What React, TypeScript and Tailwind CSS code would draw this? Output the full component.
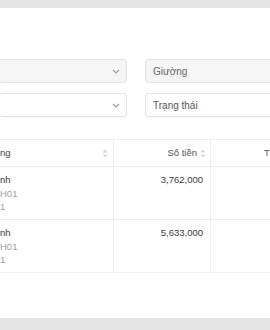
import React from "react";

const font = { fontFamily: '"Liberation Sans", Arial, sans-serif' };

function Chevron() {
  return (
    <svg width="8" height="5" viewBox="0 0 8 5" className="text-[#9a9a9a]">
      <path d="M1 1l3 3 3-3" fill="none" stroke="currentColor" strokeWidth="1.1" />
    </svg>
  );
}

function SortIcon() {
  return (
    <svg width="6" height="9" viewBox="0 0 6 9" className="text-[#d6d6d6] shrink-0">
      <path d="M3 0.5L5.5 3.5H0.5z" fill="currentColor" />
      <path d="M3 8.5L5.5 5.5H0.5z" fill="currentColor" />
    </svg>
  );
}

const rows = [
  { name: "nh", room: "H01", bed: "1", amount: "3,762,000" },
  { name: "nh", room: "H01", bed: "1", amount: "5,633,000" },
];

export default function App() {
  return (
    <div className="w-[270px] h-[330px] bg-[#e5e5e5] flex flex-col overflow-hidden" style={font}>
      <div className="h-[8px] shrink-0" />
      <div className="flex-1 bg-white overflow-hidden pt-[51px]">
        {/* Filters */}
        <div className="flex flex-col gap-[10px]">
          <div className="flex gap-[18px]">
            <div className="w-[128px] h-[24px] -ml-[1px] bg-[#f5f5f5] border border-[#e3e3e3] rounded-[3px] flex items-center justify-end pr-[6px] shrink-0">
              <Chevron />
            </div>
            <div className="w-[140px] h-[24px] shrink-0 bg-[#f5f5f5] border border-[#e3e3e3] rounded-[3px] flex items-center pl-[7px] text-[10px] text-[#666]">
              Giường
            </div>
          </div>
          <div className="flex gap-[18px]">
            <div className="w-[128px] h-[24px] -ml-[1px] bg-white border border-[#e3e3e3] rounded-[3px] flex items-center justify-end pr-[6px] shrink-0">
              <Chevron />
            </div>
            <div className="w-[140px] h-[24px] shrink-0 bg-white border border-[#e3e3e3] rounded-[3px] flex items-center pl-[7px] text-[10px] text-[#555]">
              Trạng thái
            </div>
          </div>
        </div>

        {/* Table */}
        <div className="mt-[22px] w-[300px] grid grid-cols-[114px_97px_89px] border-t border-[#ededed] text-[9.5px] text-[#3a3a3a]">
          <div className="h-[27px] border-r border-b border-[#ededed] flex items-center justify-between pr-[5px] text-[#444]">
            <span>ng</span>
            <SortIcon />
          </div>
          <div className="h-[27px] border-r border-b border-[#ededed] flex items-center justify-end gap-[3px] pr-[4px] text-[#555]">
            <span>Số tiền</span>
            <SortIcon />
          </div>
          <div className="h-[27px] border-b border-[#ededed] flex items-center pl-[53px] text-[#555]">
            <span>T</span>
          </div>

          {rows.map((r, i) => (
            <React.Fragment key={i}>
              <div className="h-[53px] border-r border-b border-[#ededed] pt-[6px] leading-[13.5px]">
                <div>{r.name}</div>
                <div className="text-[#a0a0a0]">{r.room}</div>
                <div className="text-[#a0a0a0]">{r.bed}</div>
              </div>
              <div className="h-[53px] border-r border-b border-[#ededed] pt-[6px] pr-[7px] text-right leading-[13.5px]">
                {r.amount}
              </div>
              <div className="h-[53px] border-b border-[#ededed]" />
            </React.Fragment>
          ))}
        </div>
      </div>
      <div className="h-[12px] shrink-0" />
    </div>
  );
}
